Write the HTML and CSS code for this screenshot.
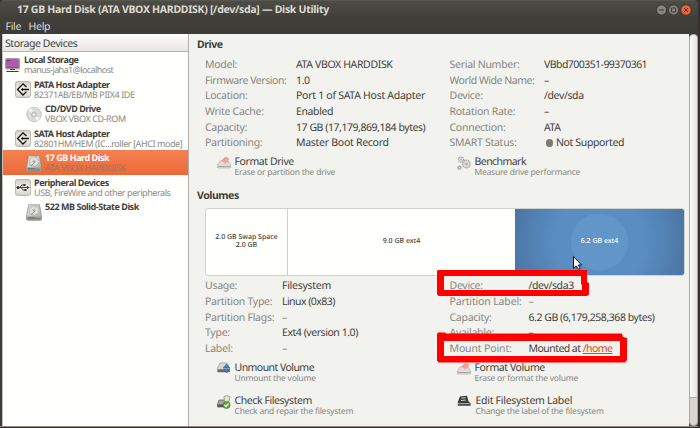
FILE: index.html
```html
<!DOCTYPE html>
<html lang="en">
<head>
<meta charset="utf-8">
<title>Disk Utility</title>
<link rel="stylesheet" href="styles.css">
</head>
<body>
<svg class="defs" width="0" height="0" aria-hidden="true">
<defs>
<linearGradient id="metal" x1="0" y1="0" x2="1" y2="1"><stop offset="0" stop-color="#e8e7e3"/><stop offset="1" stop-color="#aaa9a4"/></linearGradient>
<linearGradient id="tile" x1="0" y1="0" x2="0" y2="1"><stop offset="0" stop-color="#d3cfc8"/><stop offset=".5" stop-color="#efede8"/><stop offset="1" stop-color="#d8d5cf"/></linearGradient>
<symbol id="disk" viewBox="0 0 16 17"><path d="M2.500 .8h11l2 11.500v3q0 1-1 1h-13q-1 0-1-1v-3z" fill="url(#metal)" stroke="#8c8b87" stroke-width=".7"/><ellipse cx="8" cy="6.500" rx="4.800" ry="4.600" fill="#dededb" stroke="#b1b0ac" stroke-width=".7"/><circle cx="8" cy="6.500" r="1.300" fill="#a8a7a3"/><path d="M9 7l-4 4" stroke="#969590"/><path d="M.8 12.600h14.400v3H.8z" fill="#9b9a96"/><path d="M2 13.500h7M2 15h12" stroke="#5f5e5b" stroke-width=".6"/></symbol>
<symbol id="adapter" viewBox="0 0 16 17"><rect x=".4" y=".4" width="15.200" height="16" rx="2.500" fill="url(#tile)" stroke="#aaa69f" stroke-width=".8"/><path d="M11.500 6L8 2.800 2.500 8.500 8 14l3.500-3.400M6.500 8.500H14" fill="none" stroke="#0c0c0c" stroke-width="1.300"/><path d="M6 8.500l2-1.500v3z"/></symbol>
<symbol id="format" viewBox="0 0 14 13"><path d="M3 5h8l2.500 4v3H.5V9z" fill="#deddd9" stroke="#b4b2ad" stroke-width=".7"/><path d="M1 10.500h12" stroke="#a7a5a1"/><path d="M3.500 5L8.500.7l3.700 1.600-1 3.200L7.500 8z" fill="#e5a39e"/><path d="M3.500 5l4 1.200V8L3.300 6.800z" fill="#f2d4d0"/></symbol>
</defs>
</svg>
<div class="window">
<header class="titlebar"><h1 class="title">17 GB Hard Disk (ATA VBOX HARDDISK) [/dev/sda] — Disk Utility</h1>
<svg class="controls" width="36" height="12" viewBox="0 0 36 12"><g stroke="#2e2d29" stroke-width=".7"><circle cx="5.500" cy="6" r="5" fill="#86847d"/><circle cx="17.500" cy="6" r="5" fill="#86847d"/><circle cx="30" cy="6" r="5.200" fill="#ed6339"/></g><path d="M3 6h5M15.500 4h4v4h-4zM28 4l4 4M32 4l-4 4" fill="none" stroke="#3e3c37"/></svg>
</header>
<nav class="menu"><span>File</span><span>Help</span></nav>
<div class="panes">
<aside class="devices">
<div class="devices-head">Storage Devices</div>
<div class="dev d0"><svg class="ico" width="15" height="15" viewBox="0 0 15 15"><rect x=".5" y=".5" width="14" height="10.500" rx="1" fill="#bdbab5" stroke="#77746e" stroke-width=".6"/><path d="M1.500 1.500h12V10h-12z" fill="#732b76"/><path d="M2 3.500Q7 1 13 2v7.500H2z" fill="#b457b8"/><path d="M5 11.500h5M1.500 13.500h12" stroke="#3b3a37" stroke-width="1.200"/></svg><div><b>Local Storage</b><small class="host">manus-jaha1@localhost</small></div></div>
<div class="dev d1"><svg class="ico" width="16" height="17"><use href="#adapter"/></svg><div><b>PATA Host Adapter</b><small>82371AB/EB/MB PIIX4 IDE</small></div></div>
<div class="dev d2"><svg class="ico" width="16" height="17" viewBox="0 0 16 17"><circle cx="8" cy="8.500" r="7.300" fill="#dcdcda" stroke="#b5b5b2" stroke-width=".7"/><path d="M8 8.500L2.500 4.500 5 2zM8 8.500l5.500 4L11 15z" fill="#f7f7f5"/><circle cx="8" cy="8.500" r="2.500" fill="#cfcfcc" stroke="#aaa" stroke-width=".6"/><circle cx="8" cy="8.500" r=".9" fill="#fff"/></svg><div><b>CD/DVD Drive</b><small>VBOX VBOX CD-ROM</small></div></div>
<div class="dev d1"><svg class="ico" width="16" height="17"><use href="#adapter"/></svg><div><b>SATA Host Adapter</b><small>82801HM/HEM (IC...roller [AHCI mode]</small></div></div>
<div class="dev d2 selected"><svg class="ico" width="16" height="17"><use href="#disk"/></svg><div><b>17 GB Hard Disk</b><small>ATA VBOX HARDDISK</small></div></div>
<div class="dev d1"><svg class="ico" width="16" height="17" viewBox="0 0 16 17"><rect x=".4" y=".4" width="15.200" height="16" rx="2.500" fill="url(#tile)" stroke="#aaa69f" stroke-width=".8"/><path d="M2 8.500h11M4.500 8.500L7 6h2M6 8.500L8 11h2" fill="none" stroke="#33322f" stroke-width=".9"/><circle cx="3" cy="8.500" r="1.500" fill="#33322f"/><path d="M12 7l2.700 1.500L12 10zM8.500 5h2v2h-2zM9.500 10h2v2h-2z" fill="#33322f"/></svg><div><b>Peripheral Devices</b><small>USB, FireWire and other peripherals</small></div></div>
<div class="dev d2"><svg class="ico" width="16" height="17"><use href="#disk"/></svg><div><b>522 MB Solid-State Disk</b></div></div>
</aside>
<main class="detail">
<h2>Drive</h2>
<div class="facts">
<dl class="drive-left"><dt>Model:</dt><dd>ATA VBOX HARDDISK</dd><dt class="snug">Firmware Version:</dt><dd>1.0</dd><dt>Location:</dt><dd class="loose">Port 1 of SATA Host Adapter</dd><dt>Write Cache:</dt><dd>Enabled</dd><dt>Capacity:</dt><dd class="snug">17 GB (17,179,869,184 bytes)</dd><dt>Partitioning:</dt><dd class="loose">Master Boot Record</dd></dl>
<dl class="drive-right"><dt>Serial Number:</dt><dd class="tight">VBbd700351-99370361</dd><dt class="snug">World Wide Name:</dt><dd>–</dd><dt>Device:</dt><dd>/dev/sda</dd><dt>Rotation Rate:</dt><dd>–</dd><dt>Connection:</dt><dd>ATA</dd><dt>SMART Status:</dt><dd class="smart"><i class="dot"></i>Not Supported</dd></dl>
</div>
<div class="actions drive-actions">
<div class="action"><svg width="14" height="13"><use href="#format"/></svg><div><span>Format Drive</span><small>Erase or partition the drive</small></div></div>
<div class="action"><svg width="14" height="14" viewBox="0 0 14 14"><g fill="#dddcd9" stroke="#aaa9a5" stroke-width="1.300"><circle cx="4" cy="3.500" r="2.600" stroke-dasharray="1.300 .6"/><circle cx="9.300" cy="8" r="3.800" stroke-dasharray="1.500 .6"/><circle cx="2.500" cy="11.700" r="1.500"/></g><circle cx="9.300" cy="8" r="1.300" fill="#aaa9a5"/><circle cx="4" cy="3.500" r=".8" fill="#aaa9a5"/></svg><div><span class="tight">Benchmark</span><small>Measure drive performance</small></div></div>
</div>
<h2 class="vol-head">Volumes</h2>
<div class="volumes"><div class="vol swap">2.0 GB Swap Space<br>2.0 GB</div><div class="vol">9.0 GB ext4</div><div class="vol chosen">6.2 GB ext4</div></div>
<div class="facts vol-facts">
<dl class="vol-left"><dt>Usage:</dt><dd class="loose">Filesystem</dd><dt>Partition Type:</dt><dd class="tight">Linux (0x83)</dd><dt>Partition Flags:</dt><dd class="dim">–</dd><dt>Type:</dt><dd class="snug">Ext4 (version 1.0)</dd><dt>Label:</dt><dd class="dim">–</dd></dl>
<dl class="vol-right"><dt>Device:</dt><dd>/dev/sda3</dd><dt class="wide">Partition Label:</dt><dd class="dim">–</dd><dt>Capacity:</dt><dd class="snug">6.2 GB (6,179,258,368 bytes)</dd><dt>Available:</dt><dd>–</dd><dt class="wide">Mount Point:</dt><dd class="tight">Mounted at <a>/home</a></dd></dl>
</div>
<div class="actions volume-actions">
<div class="action"><svg width="14" height="12" viewBox="0 0 14 12"><path d="M3 1h7l2.500 5v4H.5V6z" fill="#d7d7d4" stroke="#9a9995" stroke-width=".7"/><path d="M.8 7.300h12V10H.8z" fill="#696966"/><path d="M9.500 2l3.300 4H6.200zM6.500 7h6l-3 4z" fill="#4b7fc4" stroke="#2b5793" stroke-width=".5"/></svg><div><span class="tight">Unmount Volume</span><small>Unmount the volume</small></div></div>
<div class="action"><svg width="14" height="13"><use href="#format"/></svg><div><span>Format Volume</span><small>Erase or format the volume</small></div></div>
<div class="action"><svg width="14" height="14" viewBox="0 0 14 14"><path d="M2 5h8l2 4v3H.5V9z" fill="#a7a7a2" stroke="#5d5d58" stroke-width=".7"/><path d="M1 9.500h7v2.200H1z" fill="#4b4b48"/><path d="M7 1.500q3-2 6 .5l-1.500 6h-4z" fill="#e4e5da" stroke="#7f8477" stroke-width=".7"/><circle cx="9.500" cy="10" r="3.600" fill="#65a63a" stroke="#3c7322" stroke-width=".6"/><path d="M7.500 10l1.500 1.500 2.500-3" fill="none" stroke="#fff" stroke-width="1.200"/></svg><div><span>Check Filesystem</span><small>Check and repair the filesystem</small></div></div>
<div class="action edit"><svg width="14" height="12" viewBox="0 0 14 12"><path d="M3 1.500L10 .8l1.500 5.500 2 2v2.400H.8V7z" fill="#3c3c3a"/><path d="M4.500 3.200l4-.4M4 5.500l4.800-.4" stroke="#d3d3cf"/><path d="M1 8.600h11.500" stroke="#a0a09b" stroke-width="1.300"/></svg><div><span class="loose">Edit Filesystem Label</span><small>Change the label of the filesystem</small></div></div>
</div>
</main>
<div class="scroll"><div class="thumb"></div></div>
</div>
</div>
<svg class="marks" width="700" height="428" viewBox="0 0 700 428"><g fill="#f00" fill-rule="evenodd"><path d="M437 271l1-1h149v12l2 1v11.500l-2 1.500H438.500l-1.500-2zM444 276v14h138v-5l-1-1v-8z"/><path d="M437 334l1-1.500h7l1 1h176l1 3.500 4 1v22l-2 2.500H438.500l-1.500-2zM444 341v15h176v-15z"/></g><path d="M573.500 256.500v12l2.700-2.500 2.100 3.300 2-1-2-3.300h3.300z" fill="#fff" stroke="#111" stroke-width="1"/></svg>
</body>
</html>
```
FILE: styles.css
```css
* { box-sizing: border-box; }
body { margin: 0; width: 700px; height: 428px; overflow: hidden; background: #34312f; font-family: "Noto Sans", "Open Sans", sans-serif; font-size: 10.5px; color: #3f3e3b; text-rendering: geometricPrecision; }
.defs { position: absolute; }
svg { display: block; flex: none; }
.window { height: 427px; width: 698px; border-radius: 4px 4px 0 0; background: #3c3b37; display: flex; flex-direction: column; border-top: 1px solid #57564f; }
.titlebar { height: 17px; display: flex; align-items: center; justify-content: space-between; background: linear-gradient(#4d4c45, #403f3a); padding: 0 6px 0 17px; border-radius: 4px 4px 0 0; }
.title { margin: 0; font-size: 10.5px; line-height: 15px; padding-top: 2px; font-weight: bold; color: #dfdbd2; white-space: nowrap; letter-spacing: -.29px; }
.menu { height: 16px; line-height: 19px; display: flex; gap: 7.5px; padding-left: 5.5px; color: #dfdbd2; letter-spacing: -.3px; background: linear-gradient(#403f3a, #3b3b38); }
.panes { flex: 1; min-height: 0; display: flex; padding-left: 2px; border-bottom: 1px solid #8b8781; }
.devices { width: 187px; background: #fffffd; border-right: 1px solid #b5aeab; border-left: 1px solid #c6c2bd; flex: none; }
.devices-head { height: 18px; line-height: 20px; padding-left: 2px; letter-spacing: -.4px; border-bottom: 1px solid #bbb1b0; background: linear-gradient(#fdfdfb, #e9e5e2); }
.dev { height: 24.5px; display: flex; gap: 3px; padding-top: 1.5px; white-space: nowrap; }
.dev > div { display: flex; flex-direction: column; padding-top: .5px; }
.dev b { font-size: 9px; line-height: 11px; height: 11px; letter-spacing: -.46px; }
.dev small { font-size: 9px; line-height: 10px; letter-spacing: -.42px; color: #8b8a86; }
.dev .host { letter-spacing: -.57px; }
.ico { margin-top: 3px; }
.d0 { padding-left: 2px; gap: 4px; }
.d0 .ico { margin-top: 4px; }
.d1 { padding-left: 12px; }
.d2 { padding-left: 23px; }
.selected { background: linear-gradient(#f58052, #ec6936); }
.selected b { color: #fff; }
.dev.selected small { color: #a8725a; }
.detail { flex: 1; min-width: 0; background: #f2f2ee; padding: 4px 0 0 8px; overflow: hidden; white-space: nowrap; }
h2 { font-size: 10.5px; line-height: 15px; height: 14px; margin: 0; letter-spacing: -.45px; }
.facts { display: grid; grid-template-columns: 244.5px 1fr; padding-left: 8px; margin-top: 6px; }
dl { margin: 0; display: grid; grid-auto-rows: 15.7px; line-height: 15.7px; align-content: start; }
dt { color: #878681; letter-spacing: -.27px; }
dd { margin: 0; letter-spacing: -.37px; }
dt.wide { letter-spacing: -.14px; }
.loose { letter-spacing: -.28px; }
.snug { letter-spacing: -.45px; }
.drive-left { grid-template-columns: 91px 1fr; }
.drive-right { grid-template-columns: 94.5px 1fr; }
.vol-left { grid-template-columns: 77px 1fr; }
.vol-right { grid-template-columns: 79px 1fr; }
.dim { color: #878681; }
.smart { display: flex; align-items: center; gap: 3px; padding-left: 1.5px; }
.dot { width: 7.5px; height: 7.5px; border-radius: 50%; background: #7b7a75; position: relative; top: -1.5px; }
.actions { display: grid; grid-template-columns: 240px 1fr; grid-auto-rows: 33px; padding-left: 19.5px; }
.action { display: flex; gap: 4px; }
.action span { display: block; line-height: 12px; height: 11px; letter-spacing: -.42px; }
.action small { display: block; font-size: 8.5px; line-height: 11px; letter-spacing: -.22px; color: #878681; }
.action .loose { letter-spacing: -.28px; }
dd.tight, .action .tight { letter-spacing: -.55px; }
.drive-actions { margin-top: 4px; height: 33px; }
.vol-head { margin-top: -.5px; }
.volumes { margin: 5.5px 0 0 8px; width: 480px; height: 68px; display: grid; grid-template-columns: 81px 228px 1fr; border: 1px solid #d0d3cc; border-radius: 3px; overflow: hidden; background: #fffffd; }
.vol { display: grid; place-content: center; text-align: center; font-size: 7px; line-height: 8px; font-weight: 500; border-left: 1px solid #cbcfca; }
.swap { border-left: 0; }
.chosen { color: #fff; background: radial-gradient(circle, #6296c8 0 28px, #5a8dc2 29px 45px, #4c76a5 88px); border: 0; }
.vol-facts { margin-top: 3px; }
.volume-actions { margin-top: 4.5px; }
.edit { gap: 5px; }
a { color: #dd4814; text-decoration: underline; }
.scroll { width: 9px; flex: none; background: #dcd4d1; border: 1px solid #aaa6a2; border-radius: 4px; }
.thumb { height: 363px; background: linear-gradient(90deg, #fbfbf9, #e6e4e1); border-radius: 4px 4px 0 0; border-bottom: 1px solid #aaa6a2; }
.marks { position: absolute; left: 0; top: 0; }
```
